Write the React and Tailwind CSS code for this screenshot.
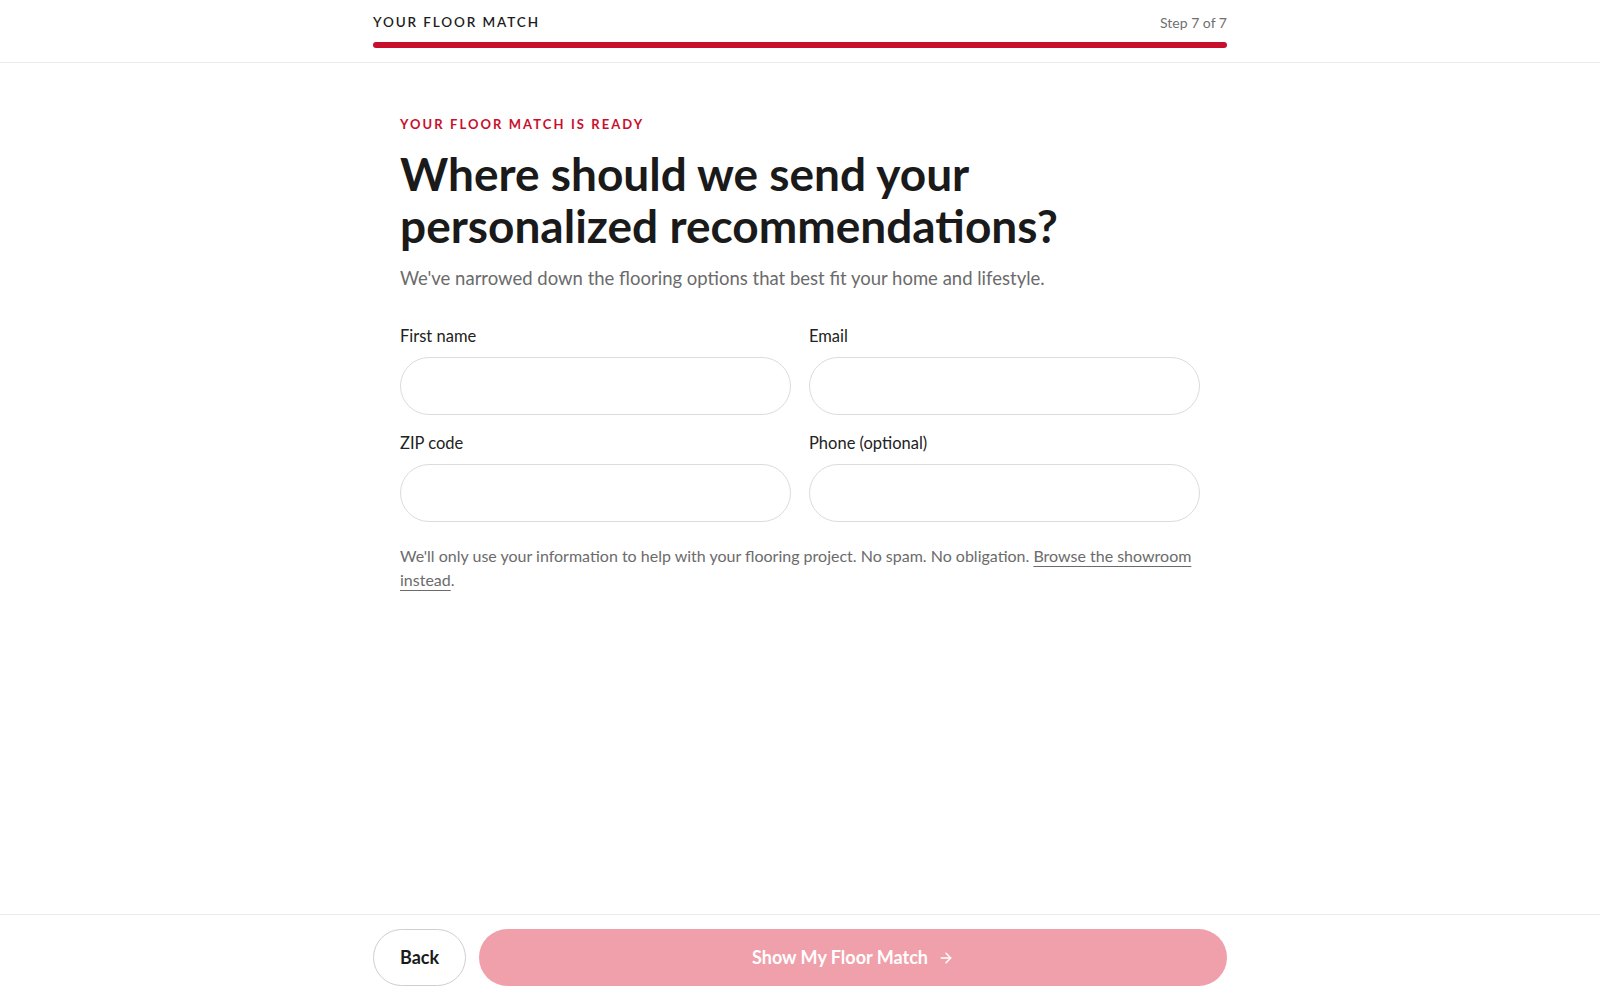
import React from "react";
import { ArrowRight } from "lucide-react";

const fields = [
  { label: "First name", type: "text" },
  { label: "Email", type: "email" },
  { label: "ZIP code", type: "text" },
  { label: "Phone (optional)", type: "tel" },
];

export default function App() {
  return (
    <div
      className="flex h-screen flex-col bg-white text-[#1c1c1c]"
      style={{ fontFamily: "Lato, 'Noto Sans', sans-serif" }}
    >
      {/* top bar */}
      <header className="border-b border-[#ececec]">
        <div className="mx-auto max-w-[894px] px-5 pt-[12px] pb-[14px]">
          <div className="flex items-center justify-between">
            <span className="text-[13.5px] font-semibold tracking-[0.14em]">
              YOUR FLOOR MATCH
            </span>
            <span className="text-[14px] text-[#707070]">Step 7 of 7</span>
          </div>
          <div className="mt-[9px] h-[6px] w-full rounded-full bg-[#c8102e]"></div>
        </div>
      </header>

      {/* form */}
      <main className="flex-1">
        <div className="mx-auto max-w-[800px] pt-[52px]">
          <p className="text-[13px] font-bold tracking-[0.16em] text-[#c8102e]">
            YOUR FLOOR MATCH IS READY
          </p>
          <h1 className="mt-[13px] text-[46px] font-bold leading-[52px] text-[#1a1a1a]">
            Where should we send your
            <br />
            personalized recommendations?
          </h1>
          <p className="mt-[13px] text-[18.5px] text-[#6b6b6b]">
            We've narrowed down the flooring options that best fit your home and lifestyle.
          </p>

          <div className="mt-[32px] grid grid-cols-2 gap-x-[18px] gap-y-[16px]">
            {fields.map((f) => (
              <label key={f.label} className="flex flex-col">
                <span className="text-[16.5px] text-[#222]">{f.label}</span>
                <input
                  type={f.type}
                  className="mt-[8px] h-[58px] rounded-full border border-[#dcdcdc] px-5 text-[17px] outline-none"
                />
              </label>
            ))}
          </div>

          <p className="mt-[22px] text-[16px] leading-[24px] text-[#6b6b6b]">
            We'll only use your information to help with your flooring project. No spam. No obligation.{" "}
            <a href="#" className="underline decoration-[#6b6b6b] underline-offset-[4px]">
              Browse the showroom instead
            </a>
            .
          </p>
        </div>
      </main>

      {/* footer actions */}
      <footer className="border-t border-[#ececec]">
        <div className="mx-auto flex max-w-[894px] gap-[13px] px-5 py-[14px]">
          <button className="h-[57px] w-[93px] rounded-full border border-[#cfcfcf] text-[18px] font-bold text-[#1a1a1a]">
            Back
          </button>
          <button className="flex h-[57px] flex-1 items-center justify-center gap-[10px] rounded-full bg-[#f0a0aa] text-[18px] font-bold text-white">
            Show My Floor Match
            <ArrowRight size={16} strokeWidth={2.25} />
          </button>
        </div>
      </footer>
    </div>
  );
}
